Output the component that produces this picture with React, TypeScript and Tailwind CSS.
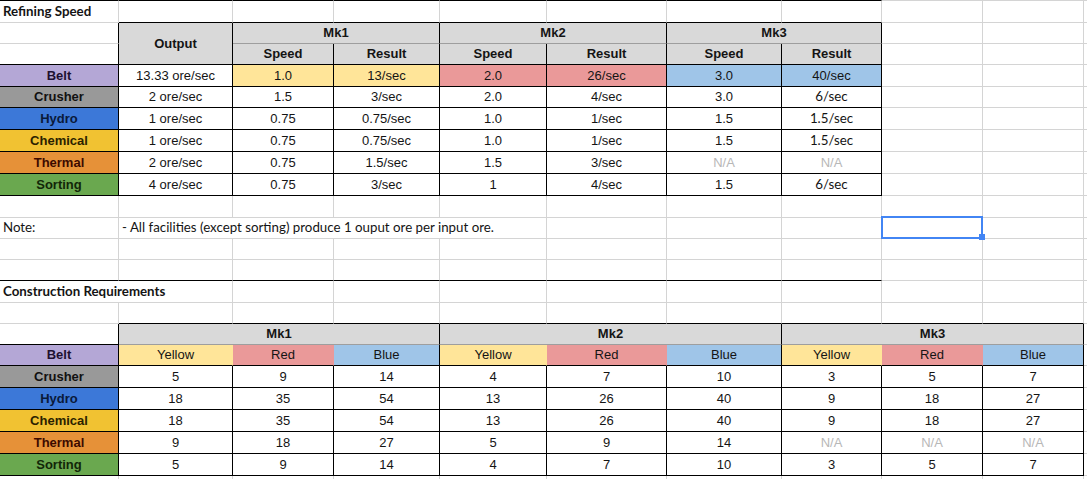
import React from 'react';

type Edge = 'k' | 'g' | 'm' | 'n';

interface Cell {
  text?: string;
  span?: string;
  bg?: string;
  fg?: string;
  bold?: boolean;
  left?: boolean;
  calibri?: boolean;
  r: Edge;
  b: Edge;
  t?: Edge;
  selected?: boolean;
}

// border colours, written out so tailwind picks them up
const RIGHT: Record<Edge, string> = {
  k: 'border-r-black',
  g: 'border-r-[#d4d4d4]',
  m: 'border-r-[#9e9e9e]',
  n: 'border-r-transparent',
};
const BOTTOM: Record<Edge, string> = {
  k: 'border-b-black',
  g: 'border-b-[#d4d4d4]',
  m: 'border-b-[#9e9e9e]',
  n: 'border-b-transparent',
};
const TOP: Record<Edge, string> = {
  k: 'border-t border-t-black',
  g: 'border-t border-t-[#d4d4d4]',
  m: 'border-t border-t-[#9e9e9e]',
  n: 'border-t border-t-transparent',
};

const HDR = 'bg-[#d9d9d9]';
const YEL = 'bg-[#ffe599]';
const RED = 'bg-[#ea9999]';
const BLU = 'bg-[#9fc5e8]';

const LABELS: Record<string, { bg: string; fg: string }> = {
  Belt: { bg: 'bg-[#b4a7d6]', fg: 'text-[#1d1030]' },
  Crusher: { bg: 'bg-[#999999]', fg: 'text-[#111111]' },
  Hydro: { bg: 'bg-[#3c78d8]', fg: 'text-[#0a1a3a]' },
  Chemical: { bg: 'bg-[#f1c232]', fg: 'text-[#2b2200]' },
  Thermal: { bg: 'bg-[#e69138]', fg: 'text-[#3d0a00]' },
  Sorting: { bg: 'bg-[#6aa84f]', fg: 'text-[#122608]' },
};

const gray = (n: number): Cell[] => Array.from({ length: n }, () => ({ r: 'g', b: 'g' }));
const label = (name: string): Cell => ({ text: name, bold: true, ...LABELS[name], r: 'k', b: 'k' });
const val = (text: string, bg?: string, r: Edge = 'k', calibri = false): Cell => ({
  text,
  bg,
  fg: text === 'N/A' ? 'text-[#b7b7b7]' : undefined,
  r,
  b: 'k',
  calibri,
});
const head = (text: string, span?: string, b: Edge = 'k'): Cell => ({ text, span, bg: HDR, bold: true, r: 'k', b });

const refining: [string, string[]][] = [
  ['Crusher', ['2 ore/sec', '1.5', '3/sec', '2.0', '4/sec', '3.0', '6/sec']],
  ['Hydro', ['1 ore/sec', '0.75', '0.75/sec', '1.0', '1/sec', '1.5', '1.5/sec']],
  ['Chemical', ['1 ore/sec', '0.75', '0.75/sec', '1.0', '1/sec', '1.5', '1.5/sec']],
  ['Thermal', ['2 ore/sec', '0.75', '1.5/sec', '1.5', '3/sec', 'N/A', 'N/A']],
  ['Sorting', ['4 ore/sec', '0.75', '3/sec', '1', '4/sec', '1.5', '6/sec']],
];

const construction: [string, string[]][] = [
  ['Crusher', ['5', '9', '14', '4', '7', '10', '3', '5', '7']],
  ['Hydro', ['18', '35', '54', '13', '26', '40', '9', '18', '27']],
  ['Chemical', ['18', '35', '54', '13', '26', '40', '9', '18', '27']],
  ['Thermal', ['9', '18', '27', '5', '9', '14', 'N/A', 'N/A', 'N/A']],
  ['Sorting', ['5', '9', '14', '4', '7', '10', '3', '5', '7']],
];

const rows: Cell[][] = [
  [
    { text: 'Refining Speed', bold: true, left: true, calibri: true, t: 'k', r: 'g', b: 'g' },
    ...Array.from({ length: 7 }, (): Cell => ({ t: 'k', r: 'g', b: 'k' })),
    ...Array.from({ length: 3 }, (): Cell => ({ t: 'g', r: 'g', b: 'g' })),
  ],
  [
    { r: 'k', b: 'g' },
    head('Output', 'row-span-2'),
    head('Mk1', 'col-span-2', 'm'),
    head('Mk2', 'col-span-2', 'm'),
    head('Mk3', 'col-span-2', 'm'),
    ...gray(3),
  ],
  [
    { r: 'k', b: 'k' },
    head('Speed'),
    head('Result'),
    head('Speed'),
    head('Result'),
    head('Speed'),
    head('Result'),
    ...gray(3),
  ],
  [
    label('Belt'),
    val('13.33 ore/sec'),
    val('1.0', YEL),
    val('13/sec', YEL),
    val('2.0', RED),
    val('26/sec', RED),
    val('3.0', BLU),
    val('40/sec', BLU),
    ...gray(3),
  ],
  ...refining.map(([name, vals]): Cell[] => [
    label(name),
    ...vals.map((v, i) => val(v, undefined, 'k', i === 6 && v !== 'N/A')),
    ...gray(3),
  ]),
  gray(11),
  [
    { text: 'Note:', left: true, calibri: true, r: 'g', b: 'g' },
    {
      text: '- All facilities (except sorting) produce 1 ouput ore per input ore.',
      span: 'col-span-4',
      left: true,
      calibri: true,
      r: 'g',
      b: 'g',
    },
    ...gray(3),
    { selected: true, r: 'g', b: 'g' },
    ...gray(2),
  ],
  gray(11),
  [...Array.from({ length: 8 }, (): Cell => ({ r: 'g', b: 'k' })), ...gray(3)],
  [
    { text: 'Construction Requirements', span: 'col-span-2', bold: true, left: true, calibri: true, r: 'g', b: 'g' },
    ...gray(9),
  ],
  [{ r: 'g', b: 'g' }, ...Array.from({ length: 9 }, (): Cell => ({ r: 'g', b: 'k' })), ...gray(1)],
  [
    { r: 'k', b: 'k' },
    head('Mk1', 'col-span-3', 'm'),
    head('Mk2', 'col-span-3', 'm'),
    head('Mk3', 'col-span-3', 'm'),
    ...gray(1),
  ],
  [
    label('Belt'),
    ...[0, 1, 2].flatMap((): Cell[] => [
      { text: 'Yellow', bg: YEL, r: 'n', b: 'k' },
      { text: 'Red', bg: RED, r: 'n', b: 'k' },
      { text: 'Blue', bg: BLU, r: 'k', b: 'k' },
    ]),
    ...gray(1),
  ],
  ...construction.map(([name, vals]): Cell[] => [label(name), ...vals.map((v) => val(v)), ...gray(1)]),
  gray(11),
];

function SheetCell({ cell }: { cell: Cell }) {
  return (
    <div
      className={clsx(
        'relative flex items-center border-r border-b whitespace-nowrap overflow-visible',
        RIGHT[cell.r],
        BOTTOM[cell.b],
        cell.t && TOP[cell.t],
        cell.span,
        cell.bg,
        cell.fg ?? 'text-[#141414]',
        cell.bold && 'font-bold',
        cell.left ? 'justify-start pl-[3px]' : 'justify-center',
        cell.calibri
          ? "font-['Lato',sans-serif] text-[13.3px]"
          : "font-['Liberation_Sans',Arial,sans-serif] text-[13px]"
      )}
    >
      {cell.text}
      {cell.selected && (
        <>
          <div className="absolute -left-px -top-[2px] w-[102px] h-[23px] border-2 border-[#4285f4] z-10" />
          <div className="absolute left-[97px] top-[16px] w-[6px] h-[6px] bg-[#4285f4] z-10" />
        </>
      )}
    </div>
  );
}

function clsx(...parts: (string | false | undefined | null)[]) {
  return parts.filter(Boolean).join(' ');
}

export default function App() {
  return (
    <div className="w-[1087px] h-[479px] overflow-hidden bg-white">
      <div className="grid w-[1184px] grid-cols-[119px_114px_101px_106px_107px_120px_115px_100px_101px_101px_100px] grid-rows-[23px_21px_21px_22px_21px_22px_22px_22px_22px_22px_21px_21px_21px_22px_21px_21px_21px_22px_22px_22px_22px_22px_22px]">
        {rows.flatMap((row, ri) => row.map((cell, ci) => <SheetCell key={`${ri}-${ci}`} cell={cell} />))}
      </div>
    </div>
  );
}
